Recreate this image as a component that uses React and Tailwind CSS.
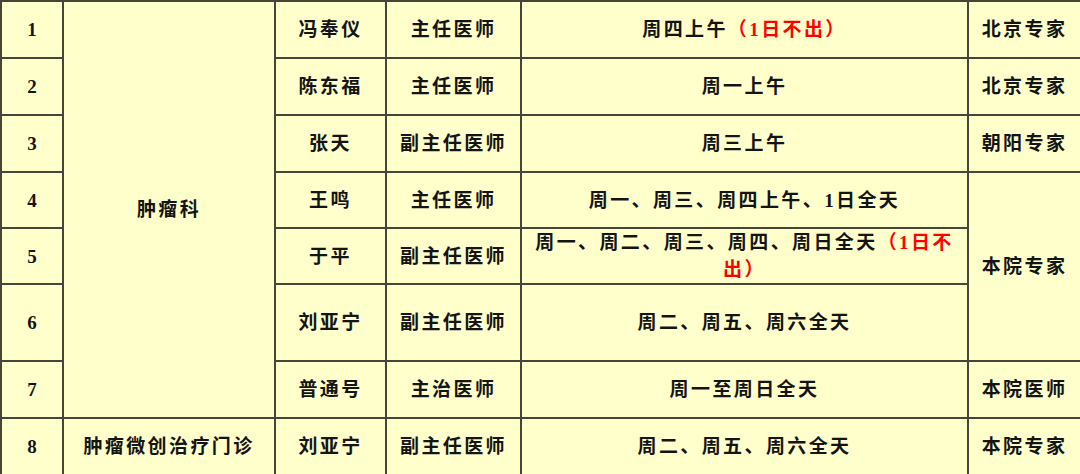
import React from 'react';

const rows = [
  { no: 1, name: '冯奉仪', title: '主任医师', time: <>周四上午<span className="text-[#ff0000]">（1日不出）</span></>, h: 57 },
  { no: 2, name: '陈东福', title: '主任医师', time: '周一上午', h: 57 },
  { no: 3, name: '张天', title: '副主任医师', time: '周三上午', h: 57 },
  { no: 4, name: '王鸣', title: '主任医师', time: '周一、周三、周四上午、1日全天', h: 56 },
  {
    no: 5, name: '于平', title: '副主任医师', h: 56,
    time: <>周一、周二、周三、周四、周日全天<span className="text-[#ff0000]">（1日不<br />出）</span></>,
  },
  { no: 6, name: '刘亚宁', title: '副主任医师', time: '周二、周五、周六全天', h: 77 },
  { no: 7, name: '普通号', title: '主治医师', time: '周一至周日全天', h: 57 },
];

const cell = 'border-2 border-[#45453a] text-center align-middle p-0';

export default function App() {
  return (
    <div className="w-[1080px] h-[474px] bg-[#ffffcc] overflow-hidden">
      <table
        className="w-[1080px] table-fixed border-collapse text-[19px] leading-[27px] tracking-[2.4px] text-[#141414] font-bold"
        style={{ fontFamily: '"Liberation Serif", "Noto Sans CJK SC", serif' }}
      >
        <colgroup>
          <col className="w-[62px]" />
          <col className="w-[212px]" />
          <col className="w-[111px]" />
          <col className="w-[135px]" />
          <col className="w-[447px]" />
          <col className="w-[113px]" />
        </colgroup>
        <tbody>
          {rows.map((r, i) => (
            <tr key={r.no} style={{ height: r.h }}>
              <td className={`${cell} tracking-normal`}>{r.no}</td>
              {i === 0 && <td rowSpan={7} className={cell}>肿瘤科</td>}
              <td className={cell}>{r.name}</td>
              <td className={cell}>{r.title}</td>
              <td className={`${cell} px-2`}>{r.time}</td>
              {i === 0 && <td className={cell}>北京专家</td>}
              {i === 1 && <td className={cell}>北京专家</td>}
              {i === 2 && <td className={cell}>朝阳专家</td>}
              {i === 3 && <td rowSpan={3} className={cell}>本院专家</td>}
              {i === 6 && <td className={cell}>本院医师</td>}
            </tr>
          ))}
          <tr style={{ height: 57 }}>
            <td className={`${cell} tracking-normal`}>8</td>
            <td className={cell}>肿瘤微创治疗门诊</td>
            <td className={cell}>刘亚宁</td>
            <td className={cell}>副主任医师</td>
            <td className={cell}>周二、周五、周六全天</td>
            <td className={cell}>本院专家</td>
          </tr>
        </tbody>
      </table>
    </div>
  );
}
